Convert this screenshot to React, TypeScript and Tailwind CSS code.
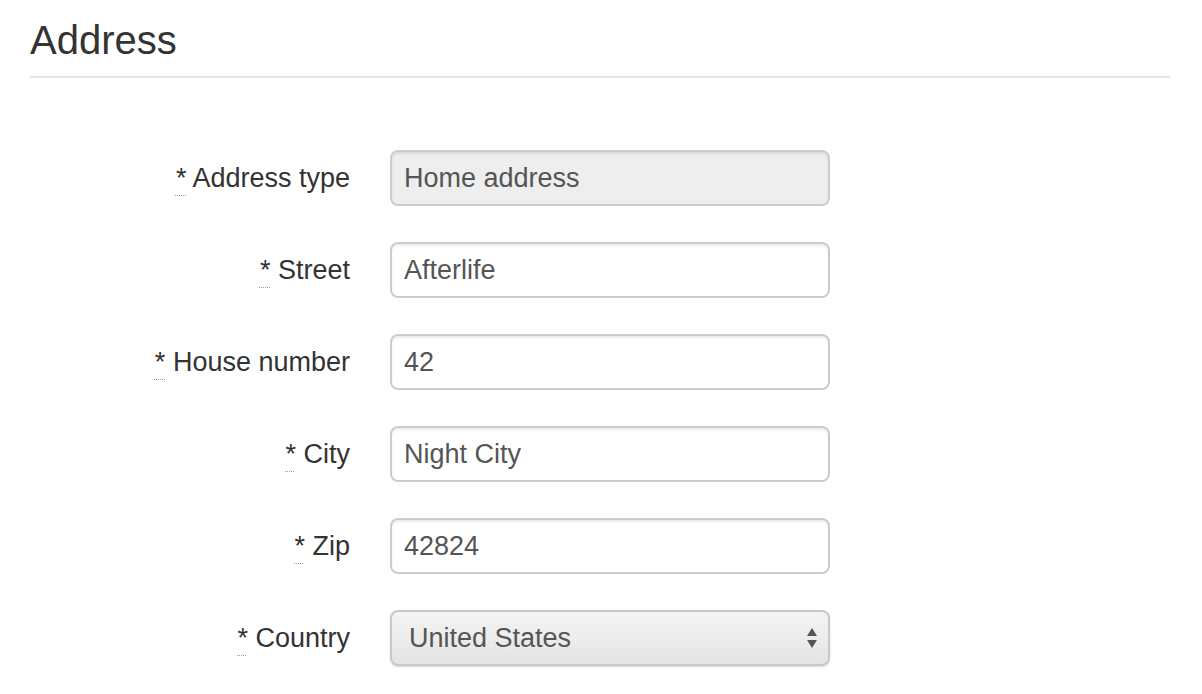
import React from 'react';

const fields = [
  { label: 'Address type', value: 'Home address', readOnly: true },
  { label: 'Street', value: 'Afterlife' },
  { label: 'House number', value: '42' },
  { label: 'City', value: 'Night City' },
  { label: 'Zip', value: '42824' },
];

const Label: React.FC<{ text: string }> = ({ text }) => (
  <label className="w-[320px] shrink-0 text-right text-[27px] leading-[40px] text-[#333]">
    <abbr
      title="required"
      className="underline decoration-dotted decoration-[#999] decoration-1 underline-offset-[8px]"
    >
      *
    </abbr>{' '}
    {text}
  </label>
);

export default function App() {
  return (
    <div
      className="min-h-screen bg-white pl-[30px] pr-[32px] pt-[18px]"
      style={{ fontFamily: '"Liberation Sans", Arial, sans-serif' }}
    >
      <div className="border-b-2 border-[#e5e5e5] pb-[13px] text-[40px] leading-[45px] text-[#333]">
        Address
      </div>

      <form className="mt-[72px] flex flex-col gap-[36px]">
        {fields.map((f) => (
          <div key={f.label} className="flex items-center">
            <Label text={f.label} />
            <input
              type="text"
              defaultValue={f.value}
              readOnly={f.readOnly}
              className={`ml-[40px] h-[56px] w-[440px] rounded-[8px] border-2 border-[#ccc] px-[12px] text-[27px] text-[#555] shadow-[inset_0_2px_2px_rgba(0,0,0,0.075)] outline-none ${
                f.readOnly ? 'bg-[#eee]' : 'bg-white'
              }`}
            />
          </div>
        ))}
        <div className="flex items-center">
          <Label text="Country" />
          <div className="relative ml-[40px] h-[56px] w-[440px]">
            <select
              defaultValue="US"
              className="h-full w-full appearance-none rounded-[8px] border-2 border-[#c8c8c8] bg-gradient-to-b from-[#f4f4f4] to-[#e4e4e4] pl-[17px] pr-[40px] text-[27px] text-[#555] shadow-[0_1px_2px_rgba(0,0,0,0.15)] outline-none"
            >
              <option value="US">United States</option>
              <option value="CA">Canada</option>
              <option value="DE">Germany</option>
            </select>
            <svg
              className="pointer-events-none absolute right-[12px] top-1/2 -translate-y-1/2"
              width="12"
              height="24"
              viewBox="0 0 12 24"
            >
              <path d="M6 2 L11 10 L1 10 Z" fill="#555" />
              <path d="M6 22 L11 14 L1 14 Z" fill="#555" />
            </svg>
          </div>
        </div>
      </form>
    </div>
  );
}
